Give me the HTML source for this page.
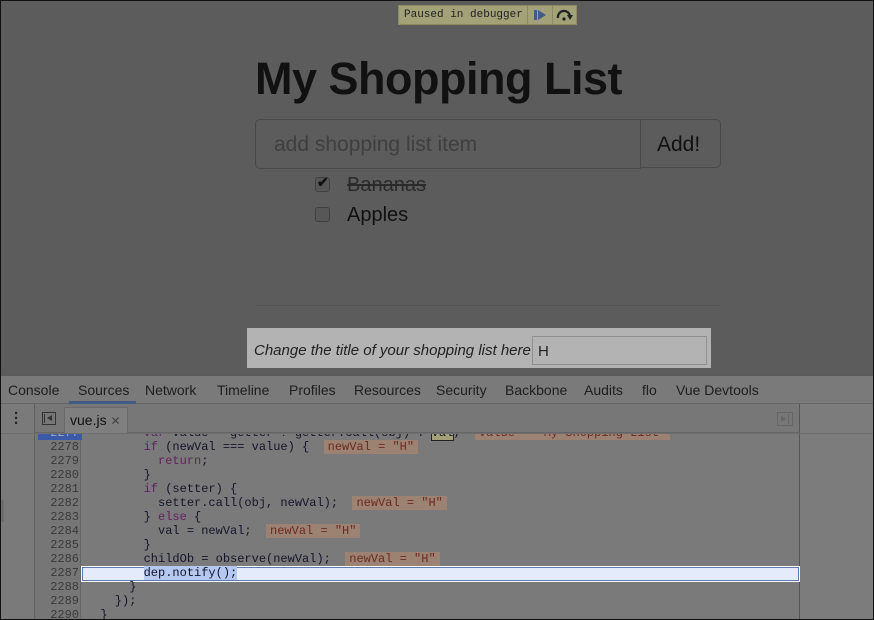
<!DOCTYPE html>
<html><head><meta charset="utf-8"><style>
*{margin:0;padding:0;box-sizing:border-box}
body{width:874px;height:620px;overflow:hidden;background:#5c5c5c;font-family:"Liberation Sans",Arial,sans-serif;position:relative}
.a{position:absolute}
.mono{font-family:"Liberation Mono",monospace}
.ln{position:absolute;left:0;width:44px;text-align:right;font:12px/14px "Liberation Mono",monospace;color:#3a3a3a}
.cl{position:absolute;left:51px;font:12px/14px "Liberation Mono",monospace;color:#15152a;white-space:pre}
.k{color:#622262}
.an{background:#9b8272;color:#6e2a22;padding:0 4px}
.tab{position:absolute;top:382px;font-size:14px;color:#1e1e1e}
</style></head><body>
<div class="a" style="left:0;top:0;width:874px;height:620px;border:1px solid #111;z-index:9;pointer-events:none"></div>
<div class="a mono" style="left:398px;top:5px;width:179px;height:20px;background:#a3a178;border:1px solid #8d8b66;font-size:11px;line-height:18px;color:#222;padding-left:5px">Paused in debugger</div>
<div class="a" style="left:527px;top:5px;width:1px;height:20px;background:#8d8b66"></div>
<div class="a" style="left:552px;top:5px;width:1px;height:20px;background:#8d8b66"></div>
<div class="a" style="left:534px;top:10px;width:3px;height:10px;background:#3d5d8a"></div>
<div class="a" style="left:538px;top:10px;width:0;height:0;border-top:5px solid transparent;border-bottom:5px solid transparent;border-left:8px solid #3d5d8a"></div>
<svg class="a" style="left:555px;top:8px" width="20" height="14"><path d="M3 10 A6 6 0 0 1 15 8" stroke="#222" stroke-width="2.2" fill="none"/><path d="M12 7 L18 7 L15 12Z" fill="#222"/><circle cx="9" cy="11" r="1.6" fill="#222"/></svg>
<div class="a" style="left:255px;top:53px;font-size:45px;font-weight:bold;color:#111;letter-spacing:-0.5px">My Shopping List</div>
<div class="a" style="left:255px;top:119px;width:386px;height:50px;border:1px solid #494949;border-radius:5px 0 0 5px;font-size:21px;color:#3f3f3f;padding:13px 0 0 18px">add shopping list item</div>
<div class="a" style="left:640px;top:119px;width:81px;height:49px;border:1px solid #494949;border-left:none;border-radius:0 5px 5px 0;font-size:21px;color:#111;padding:13px 0 0 17px">Add!</div>
<div class="a" style="left:315px;top:177px;width:15px;height:15px;border:1px solid #404040;border-radius:3px;background:#575757"></div>
<div class="a" style="left:317px;top:174px;font-size:14px;color:#111;font-weight:bold">✔</div>
<div class="a" style="left:347px;top:174px;font-size:20px;color:#2a2a2a;text-decoration:line-through">Bananas</div>
<div class="a" style="left:315px;top:207px;width:15px;height:15px;border:1px solid #404040;border-radius:3px;background:#575757"></div>
<div class="a" style="left:347px;top:204px;font-size:20px;color:#111">Apples</div>
<div class="a" style="left:255px;top:305px;width:466px;height:1px;background:#545454"></div>
<div class="a" style="left:247px;top:328px;width:464px;height:40px;background:#b3b3b3"></div>
<div class="a" style="left:254px;top:342px;font-size:15px;font-style:italic;color:#222">Change the title of your shopping list here</div>
<div class="a" style="left:532px;top:336px;width:175px;height:29px;border:1px solid #909090;font-size:15px;color:#222;padding:6px 0 0 5px">H</div>
<div class="a" style="left:0;top:375px;width:874px;height:245px;background:#7a7a7a;border-top:1px solid #5a5a5a"></div>
<div class="a" style="left:0;top:403px;width:874px;height:1px;background:#666"></div>
<div class="tab" style="left:8px">Console</div>
<div class="tab" style="left:78px">Sources</div>
<div class="tab" style="left:145px">Network</div>
<div class="tab" style="left:217px">Timeline</div>
<div class="tab" style="left:289px">Profiles</div>
<div class="tab" style="left:354px">Resources</div>
<div class="tab" style="left:436px">Security</div>
<div class="tab" style="left:505px">Backbone</div>
<div class="tab" style="left:584px">Audits</div>
<div class="tab" style="left:642px">flo</div>
<div class="tab" style="left:676px">Vue Devtools</div>
<div class="a" style="left:69px;top:401px;width:67px;height:3px;background:#3f5c86"></div>
<div class="a" style="left:34px;top:404px;width:1px;height:216px;background:#5e5e5e"></div>
<div class="a" style="left:35px;top:404px;width:765px;height:29px;background:#777;border-bottom:1px solid #666"></div>
<div class="a" style="left:799px;top:404px;width:1px;height:216px;background:#555"></div>
<div class="a" style="left:800px;top:404px;width:74px;height:216px;background:#7c7c7c"></div>
<div class="a" style="left:14px;top:411px;font-size:15px;color:#222;line-height:5px;font-weight:bold">·<br>·<br>·</div>
<div class="a" style="left:42px;top:412px;width:14px;height:13px;border:1px solid #333"></div>
<div class="a" style="left:44px;top:414px;width:1px;height:9px;background:#333"></div>
<div class="a" style="left:47px;top:415px;border-top:3.5px solid transparent;border-bottom:3.5px solid transparent;border-right:5px solid #333"></div>
<div class="a" style="left:64px;top:407px;width:64px;height:27px;background:#7f7f7f;border:1px solid #6a6a6a;border-bottom:none"></div>
<div class="a" style="left:70px;top:412px;font-size:14px;color:#111">vue.js <span style="font-size:12px;color:#444">✕</span></div>
<div class="a" style="left:777px;top:412px;width:16px;height:14px;border:1px solid #666"></div>
<div class="a" style="left:781px;top:416px;border-top:3px solid transparent;border-bottom:3px solid transparent;border-left:5px solid #666"></div>
<div class="a" style="left:788px;top:414px;width:1px;height:10px;background:#666"></div>
<div class="a" style="left:0;top:500px;width:4px;height:22px;background:#6e6e6e"></div>
<div class="a" style="left:35px;top:434px;width:46px;height:186px;background:#767676;border-right:1px solid #666"></div>
<div class="a" style="left:81px;top:566px;width:719px;height:16px;background:#e4ebfb;border:1px solid #fff;box-shadow:inset 0 0 0 1px #5c7aae"></div>
<div class="a" style="left:35px;top:434px;width:764px;height:186px;overflow:hidden">
<div class="a" style="left:3px;top:0;width:44px;height:6px;background:#3a5aa8"></div>
<div class="ln" style="top:-8px;color:#9ab">2277</div>
<div class="ln" style="top:6px">2278</div>
<div class="ln" style="top:20px">2279</div>
<div class="ln" style="top:34px">2280</div>
<div class="ln" style="top:48px">2281</div>
<div class="ln" style="top:62px">2282</div>
<div class="ln" style="top:76px">2283</div>
<div class="ln" style="top:90px">2284</div>
<div class="ln" style="top:104px">2285</div>
<div class="ln" style="top:118px">2286</div>
<div class="ln" style="top:132px">2287</div>
<div class="ln" style="top:146px">2288</div>
<div class="ln" style="top:160px">2289</div>
<div class="ln" style="top:174px">2290</div>
<div class="cl" style="top:-8px">        <span class="k">var</span> value = getter ? getter.call(obj) : <span style="background:#a3a178;outline:1px solid #222">val</span>;  <span class="an">value = "My Shopping List"</span></div>
<div class="cl" style="top:6px">        <span class="k">if</span> (newVal === value) {  <span class="an">newVal = "H"</span></div>
<div class="cl" style="top:20px">          <span class="k">return</span>;</div>
<div class="cl" style="top:34px">        }</div>
<div class="cl" style="top:48px">        <span class="k">if</span> (setter) {</div>
<div class="cl" style="top:62px">          setter.call(obj, newVal);  <span class="an">newVal = "H"</span></div>
<div class="cl" style="top:76px">        } <span class="k">else</span> {</div>
<div class="cl" style="top:90px">          val = newVal;  <span class="an">newVal = "H"</span></div>
<div class="cl" style="top:104px">        }</div>
<div class="cl" style="top:118px">        childOb = observe(newVal);  <span class="an">newVal = "H"</span></div>
<div class="cl" style="top:132px">        <span style="background:#b4c8f0">dep.notify();</span></div>
<div class="cl" style="top:146px">      }</div>
<div class="cl" style="top:160px">    });</div>
<div class="cl" style="top:174px">  }</div>
</div>
<div class="a" style="left:0;top:433px;width:874px;height:1px;background:#6e6e6e"></div>
</body></html>
